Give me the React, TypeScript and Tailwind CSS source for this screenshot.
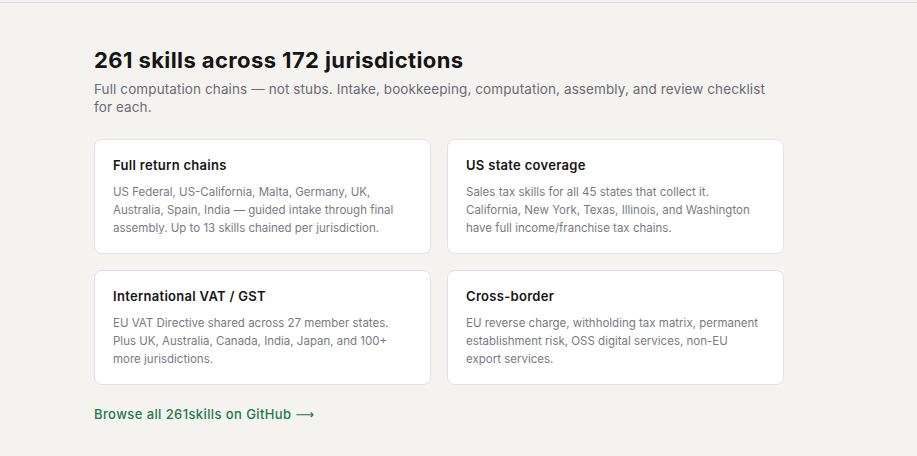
import React from "react";

const cards = [
  {
    title: "Full return chains",
    body: "US Federal, US-California, Malta, Germany, UK, Australia, Spain, India — guided intake through final assembly. Up to 13 skills chained per jurisdiction.",
  },
  {
    title: "US state coverage",
    body: "Sales tax skills for all 45 states that collect it. California, New York, Texas, Illinois, and Washington have full income/franchise tax chains.",
  },
  {
    title: "International VAT / GST",
    body: "EU VAT Directive shared across 27 member states. Plus UK, Australia, Canada, India, Japan, and 100+ more jurisdictions.",
  },
  {
    title: "Cross-border",
    body: "EU reverse charge, withholding tax matrix, permanent establishment risk, OSS digital services, non-EU export services.",
  },
];

export default function App() {
  return (
    <div
      className="min-h-[456px] w-full bg-[#f4f3ef] pt-[2px]"
      style={{ fontFamily: "Inter, 'Noto Sans', sans-serif" }}
    >
      <div className="border-t border-[#dcd8e4]">
        <div className="ml-[94px] w-[690px] pt-[42px]">
          <h2 className="text-[22px] font-bold leading-[30px] tracking-[0.4px] text-[#151515]">
            261 skills across 172 jurisdictions
          </h2>
          <p className="mt-[5px] max-w-[676px] text-[13.5px] leading-[18px] tracking-[0.1px] text-[#6b6b74]">
            Full computation chains — not stubs. Intake, bookkeeping, computation, assembly, and review checklist for each.
          </p>
          <div className="mt-[23px] grid grid-cols-2 gap-4">
            {cards.map((c) => (
              <div
                key={c.title}
                className="h-[115px] rounded-lg border border-[#e3e1e7] bg-white px-[18px] pt-[15px]"
              >
                <h3 className="text-[13px] font-semibold leading-[20px] tracking-[0.3px] text-[#151515]">
                  {c.title}
                </h3>
                <p className="mt-[8px] text-[11.5px] leading-[18px] text-[#7a7a84]">
                  {c.body}
                </p>
              </div>
            ))}
          </div>
          <a
            href="#"
            className="mt-[19px] inline-block text-[13px] font-medium leading-[20px] tracking-[0.4px] text-[#1b7a4d]"
          >
            Browse all 261skills on GitHub{" "}
            <span className="font-['DejaVu_Sans',sans-serif] font-normal">⟶</span>
          </a>
        </div>
      </div>
    </div>
  );
}
